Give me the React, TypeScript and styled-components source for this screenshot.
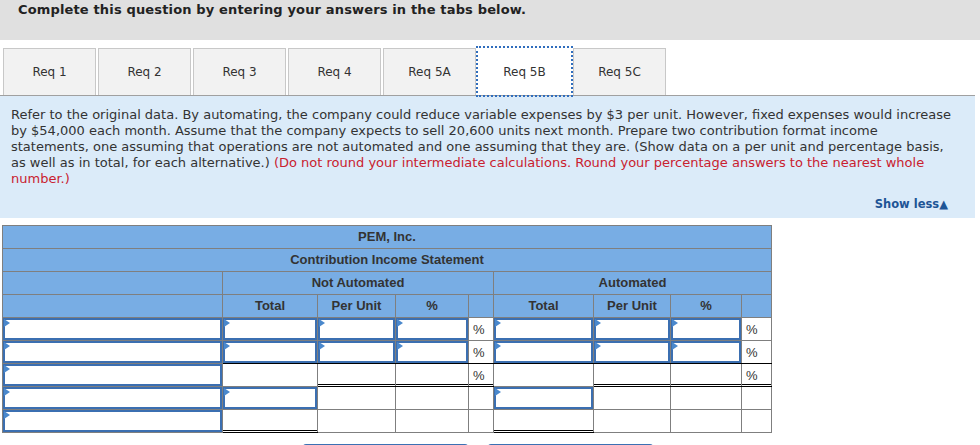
import React from "react";
import styled, { createGlobalStyle, css } from "styled-components";

const Global = createGlobalStyle`
  html, body { margin: 0; padding: 0; background: #fff; }
  body { font-family: "DejaVu Sans", Verdana, sans-serif; color: #333; }
`;

const Page = styled.div`
  width: 980px;
`;

const TopBar = styled.div`
  height: 40px;
  background: #e0e0e0;
  box-sizing: border-box;
  padding: 2px 0 0 18px;
  font-size: 13px;
  line-height: 16px;
  font-weight: bold;
  letter-spacing: 0.15px;
  color: #222;
`;

const TabStrip = styled.div`
  display: flex;
  gap: 2px;
  padding-left: 3px;
  margin-top: 8px;
  width: 975px;
  box-sizing: border-box;
`;

const Tab = styled.div<{ $active?: boolean }>`
  width: 93px;
  height: 47px;
  box-sizing: border-box;
  display: flex;
  align-items: center;
  justify-content: center;
  font-size: 12px;
  color: #333;
  background: #f2f2f2;
  border: 1px solid #c8c8c8;
  border-bottom: none;
  ${(p) =>
    p.$active &&
    css`
      background: #fff;
      border-color: #fff;
      outline: 2px dotted #2f6dbd;
      outline-offset: 0px;
      position: relative;
      z-index: 1;
    `}
`;

const Panel = styled.div`
  width: 975px;
  box-sizing: border-box;
  background: #dbebf9;
  border-top: 1px solid #a0a0a0;
  padding: 11px 20px 7px 11px;
`;

const Prompt = styled.p`
  margin: 0;
  font-size: 13px;
  line-height: 16px;
  color: #333;
`;

const Red = styled.span`
  color: #c9212f;
`;

const ShowLess = styled.div`
  margin-top: 10px;
  padding-right: 7px;
  text-align: right;
  font-size: 11.5px;
  line-height: 14px;
  font-weight: bold;
  color: #1e5596;
`;

const Statement = styled.table`
  margin: 7px 0 0 2px;
  border-collapse: collapse;
  table-layout: fixed;
  font-family: "Liberation Sans", Arial, sans-serif;
  font-size: 13px;
`;

const HeadCell = styled.td`
  background: #78ade4;
  border: 1px solid #7f7f7f;
  height: 22px;
  padding: 0;
  text-align: center;
  font-weight: bold;
  color: #333;
  line-height: 14px;
`;

type Bottom = "black" | "double" | undefined;

const Cell = styled.td<{ $bottom?: Bottom; $input?: boolean }>`
  border: 1px solid #7f7f7f;
  height: 22px;
  padding: 0 0 0 4px;
  background: #fff;
  color: #333;
  vertical-align: middle;
  ${(p) => p.$input && css`padding: 0;`}
  ${(p) => p.$bottom === "black" && css`border-bottom-color: #000;`}
  ${(p) =>
    p.$bottom === "double" &&
    css`
      border-bottom-color: #000;
      background: linear-gradient(#000, #000) 0 calc(100% - 1px) / 100% 1px no-repeat, #fff;
    `}
`;

const InputBox = styled.div`
  position: relative;
  height: 22px;
  box-sizing: border-box;
  border: 2px solid #3b6fb1;
  background: #fff;
  &::before {
    content: "";
    position: absolute;
    top: -1px;
    left: -1px;
    border-left: 6px solid #4a88cc;
    border-top: 4px solid transparent;
    border-bottom: 4px solid transparent;
  }
`;

const ButtonRow = styled.div`
  display: flex;
  justify-content: center;
  gap: 20px;
  width: 956px;
  margin-top: 11px;
`;

const NavButton = styled.div`
  width: 165px;
  height: 34px;
  background: #3b71b4;
  border-radius: 3px;
`;

const tabs = ["Req 1", "Req 2", "Req 3", "Req 4", "Req 5A", "Req 5B", "Req 5C"];
const widths = [220, 95, 78, 73, 25, 100, 77, 71, 30];

type Kind = "in" | "pct" | "blank";
type Spec = { k: Kind; b?: Bottom };

const I: Spec = { k: "in" };
const IB: Spec = { k: "in", b: "black" };
const rows: Spec[][] = [
  [I, I, I, I, { k: "pct" }, I, I, I, { k: "pct" }],
  [I, IB, IB, IB, { k: "pct", b: "black" }, IB, IB, IB, { k: "pct", b: "black" }],
  [
    I,
    { k: "blank" },
    { k: "blank", b: "double" },
    { k: "blank", b: "double" },
    { k: "pct", b: "double" },
    { k: "blank" },
    { k: "blank", b: "double" },
    { k: "blank", b: "double" },
    { k: "pct", b: "double" },
  ],
  [I, I, { k: "blank" }, { k: "blank" }, { k: "blank" }, I, { k: "blank" }, { k: "blank" }, { k: "blank" }],
  [
    I,
    { k: "blank", b: "double" },
    { k: "blank" },
    { k: "blank" },
    { k: "blank" },
    { k: "blank", b: "double" },
    { k: "blank" },
    { k: "blank" },
    { k: "blank" },
  ],
];

export default function App() {
  return (
    <Page>
      <Global />
      <TopBar>Complete this question by entering your answers in the tabs below.</TopBar>
      <TabStrip>
        {tabs.map((t) => (
          <Tab key={t} $active={t === "Req 5B"}>
            {t}
          </Tab>
        ))}
      </TabStrip>
      <Panel>
        <Prompt>
          Refer to the original data. By automating, the company could reduce variable expenses by $3 per unit.
          However, fixed expenses would increase by $54,000 each month. Assume that the company expects to sell
          20,600 units next month. Prepare two contribution format income statements, one assuming that operations
          are not automated and one assuming that they are. (Show data on a per unit and percentage basis, as well
          as in total, for each alternative.){" "}
          <Red>
            (Do not round your intermediate calculations. Round your percentage answers to the nearest whole
            number.)
          </Red>
        </Prompt>
        <ShowLess>Show less▲</ShowLess>
      </Panel>
      <Statement>
        <colgroup>
          {widths.map((w, i) => (
            <col key={i} style={{ width: w }} />
          ))}
        </colgroup>
        <tbody>
          <tr>
            <HeadCell colSpan={9}>PEM, Inc.</HeadCell>
          </tr>
          <tr>
            <HeadCell colSpan={9}>Contribution Income Statement</HeadCell>
          </tr>
          <tr>
            <HeadCell />
            <HeadCell colSpan={4}>Not Automated</HeadCell>
            <HeadCell colSpan={4}>Automated</HeadCell>
          </tr>
          <tr>
            <HeadCell />
            <HeadCell>Total</HeadCell>
            <HeadCell>Per Unit</HeadCell>
            <HeadCell>%</HeadCell>
            <HeadCell />
            <HeadCell>Total</HeadCell>
            <HeadCell>Per Unit</HeadCell>
            <HeadCell>%</HeadCell>
            <HeadCell />
          </tr>
          {rows.map((r, ri) => (
            <tr key={ri}>
              {r.map((c, ci) => (
                <Cell key={ci} $input={c.k === "in"} $bottom={c.b}>
                  {c.k === "in" ? <InputBox /> : c.k === "pct" ? "%" : null}
                </Cell>
              ))}
            </tr>
          ))}
        </tbody>
      </Statement>
      <ButtonRow>
        <NavButton />
        <NavButton />
      </ButtonRow>
    </Page>
  );
}
